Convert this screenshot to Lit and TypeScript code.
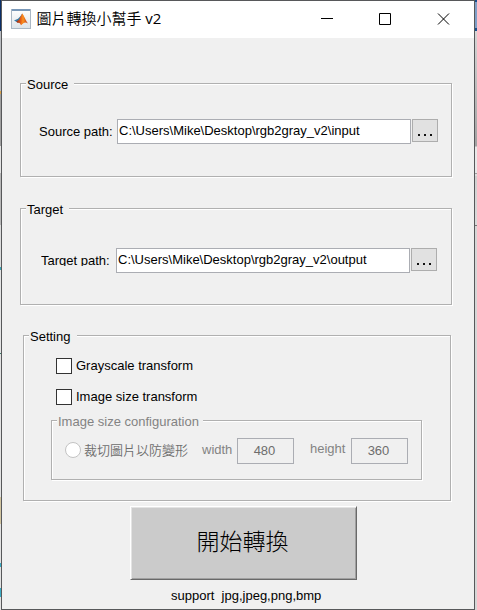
import { LitElement, html, css } from "lit";
import { customElement, property, state } from "lit/decorators.js";

@customElement("etched-panel")
class EtchedPanel extends LitElement {
  @property() label = "";

  static styles = css`
    :host {
      display: block;
      box-sizing: border-box;
      border: 1px solid #b0b0b0;
      box-shadow: 1px 1px 0 #fff, inset 1px 1px 0 #fff;
    }
    .legend {
      display: block;
      width: fit-content;
      height: 16px;
      line-height: 16px;
      margin: -7px 0 -1px 5px;
      padding: 0 var(--legend-gap, 6px) 0 1px;
      background: #f0f0f0;
      white-space: nowrap;
    }
  `;

  render() {
    return html`<span class="legend">${this.label}</span><slot></slot>`;
  }
}

@customElement("path-row")
class PathRow extends LitElement {
  @property() label = "";
  @property() value = "";

  static styles = css`
    :host {
      display: flex;
      align-items: flex-start;
    }
    .label {
      height: var(--label-height, 18px);
      line-height: 16px;
      margin-top: 5px;
      width: var(--label-width, 78px);
      overflow: hidden;
      white-space: pre;
    }
    .field {
      box-sizing: border-box;
      width: 294px;
      height: 25px;
      border: 1px solid #abadb3;
      background: #fff;
      padding-left: 1px;
      line-height: 22px;
      white-space: nowrap;
    }
    .browse {
      box-sizing: border-box;
      width: 26px;
      height: 23px;
      margin-left: 1px;
      border: 1px solid #adadad;
      background: #e1e1e1;
      display: flex;
      justify-content: center;
      align-items: flex-end;
      gap: 4px;
      padding-bottom: 5px;
    }
    .dot {
      width: 2px;
      height: 2px;
      background: #111;
    }
  `;

  render() {
    return html`
      <span class="label">${this.label}</span>
      <span class="field">${this.value}</span>
      <span class="browse"><i class="dot"></i><i class="dot"></i><i class="dot"></i></span>
    `;
  }
}

@customElement("app-root")
class AppRoot extends LitElement {
  @state() private source = "C:\\Users\\Mike\\Desktop\\rgb2gray_v2\\input";
  @state() private target = "C:\\Users\\Mike\\Desktop\\rgb2gray_v2\\output";

  static styles = css`
    :host {
      display: grid;
      grid-template-columns: 1px 474px 2px;
      width: 477px;
      height: 610px;
      overflow: hidden;
      font: 13px "Liberation Sans", "Noto Sans CJK TC", sans-serif;
      color: #000;
    }
    .behind-left {
      background: linear-gradient(#0b2f68 0 31px, #b9bcc0 31px 91px, #d8a24a 91px 94px, #a0a0a0 94px 146px,
        #e4e4e4 146px 173px, #b8b8b8 173px 225px, #dcdcdc 225px 267px, #3ba5b5 267px 270px, #e4e4e4 270px 353px,
        #397a68 353px 354px, #e2e2e2 354px 497px, #d2c5a0 497px 524px, #e2e2e2 524px 563px,
        #3bacc4 563px 567px, #e2e2e2 567px 588px, #3bacc4 588px 597px, #e2e2e2 597px);
    }
    .behind-right {
      background: linear-gradient(#174f8c 0 2px, #7f9fc8 2px 28px, #174f8c 28px 31px, #d6d6d6 31px, #a2a2a2 146px,
        #e8e8e8 147px 173px, #a0a0a0 173px 174px, #dedede 174px 176px, #d0d0d0 176px, #dadada 225px,
        #777 225px 226px, #d6d6d6 226px);
    }
    .window {
      box-sizing: border-box;
      height: 610px;
      border: 1px solid #57585a;
      background: #f0f0f0;
      display: flex;
      flex-direction: column;
    }
    .titlebar {
      height: 37px;
      flex: none;
      background: #fff;
      display: flex;
      align-items: center;
    }
    .logo {
      width: 20px;
      height: 20px;
      margin: -1px 0 0 9px;
    }
    .title {
      flex: 1;
      margin: -3px 0 0 5.5px;
      font: 350 15px/22px "Noto Sans CJK TC", sans-serif;
      white-space: nowrap;
    }
    .latin {
      font: 15px/22px "Open Sans", "Noto Sans", sans-serif;
      margin-left: 0.5px;
    }
    .controls {
      width: 174px;
      height: 37px;
      flex: none;
    }
    .content {
      padding-left: 18px;
    }
    .source {
      width: 432px;
      height: 94px;
      margin-top: 45px;
    }
    .source path-row {
      margin: 27px 0 0 18px;
    }
    .target {
      width: 432px;
      height: 97px;
      margin-top: 31px;
    }
    .target path-row {
      margin: 31px 0 0 20px;
      --label-width: 75px;
      --label-height: 13px;
    }
    .setting {
      width: 428px;
      height: 166px;
      margin: 30px 0 0 3px;
      --legend-gap: 7px;
    }
    .check {
      display: flex;
      align-items: center;
      gap: 4px;
      height: 16px;
      margin-left: 32px;
      line-height: 15px;
      white-space: nowrap;
    }
    .check-text {
      padding-bottom: 1px;
    }
    .gray {
      margin-top: 14px;
    }
    .size {
      margin-top: 15px;
    }
    .box {
      box-sizing: border-box;
      width: 16px;
      height: 16px;
      border: 1px solid #333;
      background: #fff;
    }
    .config {
      width: 371px;
      height: 60px;
      margin: 15px 0 0 27px;
      color: #838383;
      --legend-gap: 4px;
    }
    .sizes {
      display: flex;
      align-items: flex-start;
      margin: 9px 0 0 13px;
      white-space: nowrap;
    }
    .radio {
      box-sizing: border-box;
      width: 16px;
      height: 16px;
      margin-top: 4px;
      border: 1px solid #c3c3c3;
      border-radius: 50%;
      background: #fff;
    }
    .crop {
      width: 106px;
      margin: 4px 0 0 3px;
      font: 350 13px/15px "Noto Sans CJK TC", sans-serif;
      color: #6d6d6d;
    }
    .width {
      width: 31px;
      margin: 4px 4px 0 12px;
      line-height: 16px;
    }
    .height {
      width: 37px;
      margin: 3px 4px 0 16px;
      line-height: 16px;
    }
    .number {
      box-sizing: border-box;
      width: 57px;
      height: 26px;
      border: 1px solid #abadb3;
      line-height: 24px;
      text-align: center;
      padding-right: 2px;
      color: #6d6d6d;
    }
    .start {
      box-sizing: border-box;
      width: 227px;
      height: 74px;
      margin: 5px 0 0 110px;
      padding-right: 2px;
      border: 1px solid;
      border-color: #fff #696969 #696969 #fff;
      box-shadow: inset 1px 1px 0 #e3e3e3, inset -1px -1px 0 #a0a0a0;
      background: #cbcbcb;
      text-align: center;
      font: 300 23px/67px "Noto Sans CJK TC", sans-serif;
    }
    .support {
      margin: 8px 0 0 151px;
      line-height: 16px;
      white-space: pre;
    }
  `;

  render() {
    return html`
      <div class="behind-left"></div>
      <main class="window">
        <header class="titlebar">
          <svg class="logo" viewBox="0 0 20 20">
            <defs>
              <linearGradient id="paper" x2="0" y2="1">
                <stop stop-color="#fff" /><stop offset="1" stop-color="#dce3e8" />
              </linearGradient>
              <linearGradient id="flame">
                <stop stop-color="#962414" /><stop offset=".45" stop-color="#ef6b18" />
                <stop offset=".6" stop-color="#f58b22" /><stop offset="1" stop-color="#b92e14" />
              </linearGradient>
            </defs>
            <rect x=".5" y=".5" width="19" height="19" fill="url(#paper)" stroke="#aab7c4" />
            <rect x="1" y="0" width="18" height="2" fill="#7897b8" />
            <path d="M3 11.6 7 9.7 9.2 7.5 11.2 4.5 9.8 10 7.2 13.7Z" fill="#367aa5" />
            <path d="M5.2 12.8 8 10.8 11.2 4.5C12.8 6 14.5 11 17 14.5 14.5 12.8 13 13.2 10 16.2 9 14 8 13.5 7 14Z" fill="url(#flame)" />
            <path d="M11.2 4.5C12.6 6 13 9 13.4 12L10 16Q12 11 11.2 4.5Z" fill="#f58a20" />
          </svg>
          <div class="title">圖片轉換小幫手 <span class="latin">v2</span></div>
          <svg class="controls" viewBox="0 0 174 37" fill="none" stroke="#000">
            <path d="M21 17.5H33" />
            <path d="M79.5 12.5H90.5V23.5H79.5Z" />
            <path d="M138 12.5 149 23.5M149 12.5 138 23.5" />
          </svg>
        </header>
        <div class="content">
          <etched-panel class="source" label="Source">
            <path-row label="Source path:" .value=${this.source}></path-row>
          </etched-panel>
          <etched-panel class="target" label="Target">
            <path-row label="Target path:" .value=${this.target}></path-row>
          </etched-panel>
          <etched-panel class="setting" label="Setting">
            <div class="check gray"><i class="box"></i><span class="check-text">Grayscale transform</span></div>
            <div class="check size"><i class="box"></i><span class="check-text">Image size transform</span></div>
            <etched-panel class="config" label="Image size configuration">
              <div class="sizes">
                <i class="radio"></i><span class="crop">裁切圖片以防變形</span>
                <span class="width">width</span><span class="number">480</span>
                <span class="height">height</span><span class="number">360</span>
              </div>
            </etched-panel>
          </etched-panel>
          <div class="start">開始轉換</div>
          <div class="support">support  jpg,jpeg,png,bmp</div>
        </div>
      </main>
      <div class="behind-right"></div>
    `;
  }
}
